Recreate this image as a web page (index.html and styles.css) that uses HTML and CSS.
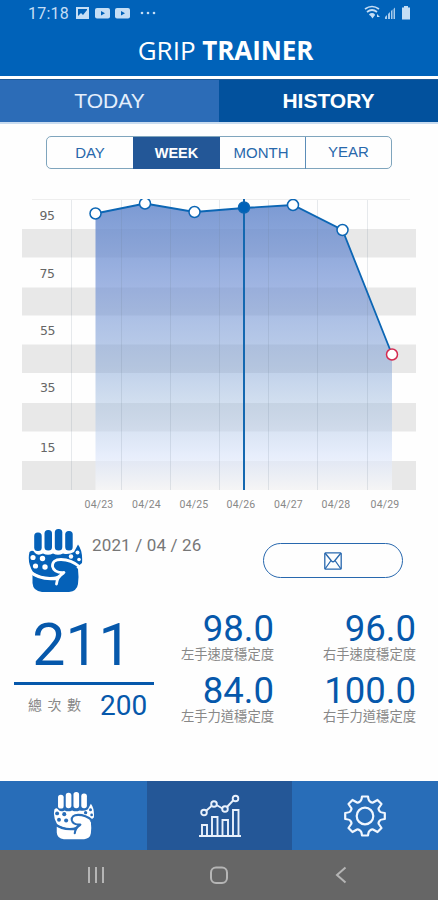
FILE: index.html
```html
<!DOCTYPE html>
<html lang="zh-Hant-TW">

<head>
    <meta charset="UTF-8">
    <title>GRIP TRAINER</title>
    <meta name="viewport" content="width=device-width, initial-scale=1.0">
    <link rel="stylesheet" href="styles.css">
</head>

<body>
    <!-- 共用圖示 -->
    <svg class="defs" width="0" height="0">
        <symbol id="hand" viewBox="0 0 55 64">
            <path d="M1.500 23Q5 20 7 24Q10 27 15 24.500Q20 27 25 24.500Q30 27 35 24.500Q41 26 46 23L50 15.500Q55 22 54 34L49 38L30 47Q16 50 5 43Q-1 33 1.500 23z" fill="currentColor" />
            <g fill="currentColor" class="gap">
                <rect x="6.200" y="3.500" width="7.500" height="18.500" rx="3.500" />
                <rect x="16.500" y="1" width="7.500" height="20.500" rx="3.500" />
                <rect x="26.800" y="0" width="7.500" height="21.500" rx="3.500" />
                <rect x="37.200" y="2" width="7.500" height="19.500" rx="3.500" />
            </g>
            <g class="dots">
                <circle cx="5" cy="28.500" r="2.600" />
                <circle cx="14.500" cy="29.500" r="2.700" />
                <circle cx="7.500" cy="37" r="2.600" />
                <circle cx="17" cy="38" r="2.700" />
                <circle cx="43" cy="27.500" r="2.200" />
                <circle cx="49.500" cy="23.500" r="2" />
                <circle cx="51" cy="30.500" r="1.800" />
            </g>
            <path d="M4.500 46Q14 51 27 50L33 44Q25 42 26 37.500Q27 32 34 32Q43 32 50 40Q51 48 50 55Q49 62 41 63H14Q5 62 4.500 54z" fill="currentColor" />
            <path class="swoosh" d="M2.500 43Q11 51 28 49.500L36 43.500Q26 44 24.500 37.500Q24 30.500 33 30.500Q43 30.500 52 38M35.500 44Q29 48 28.500 55" />
        </symbol>
    </svg>

    <!-- 標題列 -->
    <header class="header">
        <div class="status">
            <span class="time">17:18</span>
            <svg class="status_left" width="84" height="14" viewBox="0 0 84 14" fill="#c5def5">
                <path fill-rule="evenodd" d="M1 1h13v12H1zM3 3v7l3-3 2 2 4-5v-1z" />
                <rect x="20" y="2" width="15" height="10.500" rx="2" />
                <rect x="40" y="2" width="15" height="10.500" rx="2" />
                <path d="M26 5l4 2.200-4 2.300zM46 5l4 2.200-4 2.300z" fill="#0062b9" />
                <circle cx="67" cy="7" r="1.300" /><circle cx="73" cy="7" r="1.300" /><circle cx="79" cy="7" r="1.300" />
            </svg>
            <svg class="status_right" width="48" height="16" viewBox="0 0 48 16" fill="#c5def5">
                <path d="M1 4Q8-1 15 4M3 7q5-4 10 0M5.500 10q2.500-2 5 0" fill="none" stroke="#c5def5" stroke-width="1.700" />
                <path d="M6 10l5 0-2.500 3.500zM13 9l3 3h-3z" />
                <path d="M21 14v-2l2-2v4zM24 14v-5l2-2v7zM27 14V6l1.500-1.500V14zM29.500 14V4L31 2.500V14z" opacity=".85" />
                <path d="M40 1h4v1.500h2V14.500h-8V2.500h2z" />
            </svg>
        </div>
        <h1 class="title">GRIP <b>TRAINER</b></h1>
    </header>
    <div class="tabs">
        <div class="tab">TODAY</div>
        <div class="tab active">HISTORY</div>
    </div>

    <main class="main">
        <!-- 期間切換 -->
        <div class="period">
            <div class="period_btn">DAY</div>
            <div class="period_btn active">WEEK</div>
            <div class="period_btn month">MONTH</div>
            <div class="period_btn year">YEAR</div>
        </div>

        <!-- 折線圖 -->
        <svg class="chart" width="438" height="330" viewBox="0 190 438 330">
            <defs>
                <linearGradient id="area" gradientUnits="userSpaceOnUse" x1="0" y1="200" x2="0" y2="490">
                    <stop offset="0" stop-color="#6488cb" stop-opacity=".86" />
                    <stop offset=".3" stop-color="#7090d4" stop-opacity=".66" />
                    <stop offset=".58" stop-color="#7c9fd4" stop-opacity=".48" />
                    <stop offset=".7" stop-color="#9dbade" stop-opacity=".46" />
                    <stop offset=".88" stop-color="#dbe5fa" stop-opacity=".66" />
                    <stop offset="1" stop-color="#fafafa" stop-opacity=".75" />
                </linearGradient>
                <clipPath id="plot"><rect x="22" y="199" width="394" height="292" /></clipPath>
            </defs>
            <path d="M22 229h394v28.500H22zM22 287.500h394v28H22zM22 344.500h394v28.500H22zM22 403h394v28.500H22zM22 461h394v29H22z" fill="#e8e8e8" />
            <g clip-path="url(#plot)">
                <path d="M95.500 213.500L145 203.500 194.500 212 244 208 293 205 342.500 230 392 354.500V490H95.500z" fill="url(#area)" />
                <path d="M71.500 199v291M121.500 199v291M170.500 199v291M219.500 199v291M268.500 199v291M317.500 199v291M367.500 199v291" stroke="#6c7c92" stroke-opacity=".16" />
                <path d="M32 199.500h378" stroke="#eee" />
                <path d="M244 199v291" stroke="#1468b0" stroke-width="2" />
                <path d="M95.500 213.500L145 203.500 194.500 212 244 208 293 205 342.500 230 392 354.500" fill="none" stroke="#0c66b4" stroke-width="1.800" />
                <g fill="#fff" stroke="#0c66b4" stroke-width="1.500">
                    <circle cx="95.500" cy="213.500" r="5.500" />
                    <circle cx="145" cy="203.500" r="5.500" />
                    <circle cx="194.500" cy="212" r="5.500" />
                    <circle cx="244" cy="207.500" r="5.500" fill="#0062b9" />
                    <circle cx="293" cy="205" r="5.500" />
                    <circle cx="342.500" cy="230" r="5.500" />
                    <circle cx="392" cy="354.500" r="5.500" stroke="#d42b50" />
                </g>
            </g>
            <g class="axis_y">
                <text x="47" y="220">95</text>
                <text x="47" y="278">75</text>
                <text x="47.500" y="335">55</text>
                <text x="47.500" y="392">35</text>
                <text x="47.500" y="451.500">15</text>
            </g>
            <g class="axis_x">
                <text x="99" y="507.500">04/23</text>
                <text x="146.500" y="507.500">04/24</text>
                <text x="194" y="507.500">04/25</text>
                <text x="241" y="507.500">04/26</text>
                <text x="288.500" y="507.500">04/27</text>
                <text x="336" y="507.500">04/28</text>
                <text x="385" y="507.500">04/29</text>
            </g>
        </svg>

        <!-- 日期和寄信 -->
        <div class="info">
            <svg class="info_hand" width="55" height="64"><use href="#hand" /></svg>
            <span class="date">2021 / 04 / 26</span>
            <div class="mail">
                <svg width="18" height="18" viewBox="0 0 18 18" fill="none" stroke="#2868ae" stroke-width="1.300">
                    <rect x=".8" y=".8" width="16.400" height="16.400" rx="1" />
                    <path d="M1 1l6.500 8q1.500 1.500 3 0L17 1M1 17l6-8.500M17 17l-6-8.500" />
                </svg>
            </div>
        </div>

        <!-- 統計數字 -->
        <div class="stats">
            <div class="total">
                <div class="total_num">211</div>
                <div class="total_row">
                    <span class="total_label">總次數</span>
                    <span class="total_goal">200</span>
                </div>
            </div>
            <div class="grid">
                <div class="item">
                    <div class="num">98.0</div>
                    <div class="label">左手速度穩定度</div>
                </div>
                <div class="item">
                    <div class="num">96.0</div>
                    <div class="label">右手速度穩定度</div>
                </div>
                <div class="item">
                    <div class="num">84.0</div>
                    <div class="label">左手力道穩定度</div>
                </div>
                <div class="item">
                    <div class="num">100.0</div>
                    <div class="label">右手力道穩定度</div>
                </div>
            </div>
        </div>
    </main>

    <!-- 底部選單 -->
    <nav class="nav">
        <div class="nav_item">
            <svg class="nav_hand" width="42" height="48"><use href="#hand" /></svg>
        </div>
        <div class="nav_item active">
            <svg width="42" height="44" viewBox="0 0 42 44" fill="none" stroke="#e9f1fc" stroke-width="1.900">
                <path d="M0 42h42M3 42V31h5v11M13 42V23h5.500v19M23.500 42V26H29v16M34 42V16h5.500v26M7.500 16.500l5-4.500M17.500 11l6 3.500M28 13l6.500-7" />
                <circle cx="5" cy="18.500" r="2.800" />
                <circle cx="15" cy="10" r="2.800" />
                <circle cx="26" cy="15" r="2.800" />
                <circle cx="36.500" cy="4.500" r="2.800" />
            </svg>
        </div>
        <div class="nav_item">
            <svg width="42" height="42" viewBox="-21 -21 42 42" fill="none" stroke="#f1f7ff" stroke-width="2.200" stroke-linejoin="round">
                <circle r="8.300" />
                <path d="M-3-19.500H3Q3.500-15 5-14.500Q7-13 8-13.500L12.500-16 16.500-12 13.800-8Q13-7 14.500-5Q15-3.500 19.800-3V3Q15 3.500 14.500 5Q13 7 13.800 8L16.500 12 12.500 16 8 13.500Q7 13 5 14.500Q3.500 15 3 19.500H-3Q-3.500 15-5 14.500Q-7 13-8 13.500L-12.500 16-16.500 12-13.800 8Q-13 7-14.500 5Q-15 3.500-19.800 3V-3Q-15-3.500-14.500-5Q-13-7-13.800-8L-16.500-12-12.500-16-8-13.500Q-7-13-5-14.500Q-3.500-15-3-19.500z" />
            </svg>
        </div>
    </nav>
    <!-- 手機導覽鍵 -->
    <div class="keys">
        <svg width="18" height="18" viewBox="0 0 18 18"><path d="M2 1v16M9 1v16M16 1v16" /></svg>
        <svg width="18" height="18" viewBox="0 0 18 18"><rect x="1" y="1.500" width="16" height="15.500" rx="5" /></svg>
        <svg width="18" height="18" viewBox="0 0 18 18"><path d="M12.500 1.500L4 9l8.500 7.500" /></svg>
    </div>
</body>

</html>
```

FILE: styles.css
```css
* {
    box-sizing: border-box;
}

body {
    margin: 0;
    width: 438px;
    height: 900px;
    display: flex;
    flex-direction: column;
    background-color: #fefefe;
    font-family: "Liberation Sans", "Noto Sans CJK TC", sans-serif;
    overflow: hidden;
}

svg {
    display: block;
    flex: none;
}

.defs {
    position: absolute;
}

.header {
    height: 79px;
    background-color: #0062b9;
    border-bottom: 3px solid white;
}

.status {
    display: flex;
    align-items: center;
    height: 26px;
    padding: 0 26px 0 28px;
    color: #c5def5;
    font: 16px Roboto, sans-serif;
}

.time {
    width: 47px;
    letter-spacing: 0.2px;
}

.status_right {
    margin-left: auto;
}

.title {
    margin: 6px 0 0;
    padding-left: 13px;
    text-align: center;
    font: 26px/37px "Open Sans", sans-serif;
    color: white;
}

.title b {
    letter-spacing: -0.1px;
}

.tabs {
    display: flex;
    height: 45px;
    border-top: 1px solid #1c5896;
    border-bottom: 2px solid #c9dcf0;
}

.tab {
    flex: 1;
    background-color: #2c6cb7;
    color: #e4effc;
    text-align: center;
    font-size: 21px;
    line-height: 42px;
}

.tab.active {
    background-color: #02519d;
    color: white;
    font-weight: bold;
}

.main {
    flex: 1;
    padding-top: 12px;
}

.period {
    display: grid;
    grid-template-columns: 86px 87px 85px 86px;
    width: 346px;
    height: 33px;
    margin-left: 46px;
    border: 1px solid #7fa5bd;
    border-radius: 5px;
}

.period_btn {
    text-align: center;
    font-size: 15px;
    line-height: 32px;
    color: #2868ab;
}

.period_btn.active {
    background-color: #235797;
    color: white;
    font-weight: bold;
    font-size: 14.5px;
}

.period_btn.month {
    padding-right: 3px;
}

.period_btn.year {
    border-left: 1px solid #5b8db8;
    line-height: 30px;
}

.chart {
    margin-top: 21px;
}

.axis_y {
    font: 12.5px "DejaVu Sans", sans-serif;
    letter-spacing: -0.5px;
    fill: #666;
    text-anchor: middle;
}

.axis_x {
    font: 10.5px Roboto, sans-serif;
    letter-spacing: 0.2px;
    fill: #888;
    text-anchor: middle;
}

.info {
    display: flex;
    align-items: flex-start;
    height: 84px;
    padding: 9px 35px 0 28px;
}

/* 手掌圖示的鏤空顏色 */
.info_hand {
    --hole: white;
    color: #0561b8;
}

.dots {
    fill: var(--hole);
}

.gap {
    stroke: var(--hole);
    stroke-width: 3px;
    paint-order: stroke;
}

.swoosh {
    fill: none;
    stroke: var(--hole);
    stroke-width: 2.8px;
    stroke-linecap: round;
    stroke-linejoin: round;
}

.date {
    margin: 6px 0 0 9px;
    font: 17px/20px Roboto, sans-serif;
    letter-spacing: 0.15px;
    color: #777;
}

.mail {
    display: flex;
    align-items: center;
    justify-content: center;
    width: 140px;
    height: 35px;
    margin: 14px 0 0 auto;
    border: 1.5px solid #2868ae;
    border-radius: 18px;
}

.stats {
    display: flex;
    padding: 6px 22px 0 14px;
}

.total {
    width: 140px;
}

.total_num {
    height: 75px;
    padding-right: 4px;
    border-bottom: 3px solid #0658ab;
    color: #0658ab;
    text-align: center;
    font: 59px/70px Roboto, sans-serif;
}

.total_row {
    display: flex;
    align-items: center;
    height: 42px;
    padding-left: 14px;
}

.total_label {
    width: 72px;
    font-size: 14px;
    line-height: 16px;
    letter-spacing: 5.5px;
    color: #888;
    padding-bottom: 2px;
}

.total_goal {
    font: 28px/32px Roboto, sans-serif;
    color: #0658ab;
}

.grid {
    flex: 1;
    display: grid;
    grid-template-columns: 120px 142px;
    grid-auto-rows: 61.5px;
    padding-top: 1px;
}

.item {
    text-align: right;
}

.num {
    font: 36.5px/36px Roboto, sans-serif;
    color: #0658ab;
}

.label {
    font-size: 13.3px;
    line-height: 15px;
    color: #888;
}

.nav {
    display: grid;
    grid-template-columns: 147px 145px 146px;
    height: 69px;
}

.nav_item {
    display: flex;
    align-items: center;
    justify-content: center;
    background-color: #286db8;
}

.nav_item.active {
    background-color: #245797;
}

.nav_hand {
    --hole: #286db8;
    color: white;
}

.keys {
    display: flex;
    justify-content: space-between;
    align-items: center;
    height: 50px;
    padding: 0 87px;
    background-color: #666;
    fill: none;
    stroke: #b5b5b5;
    stroke-width: 2;
}
```
